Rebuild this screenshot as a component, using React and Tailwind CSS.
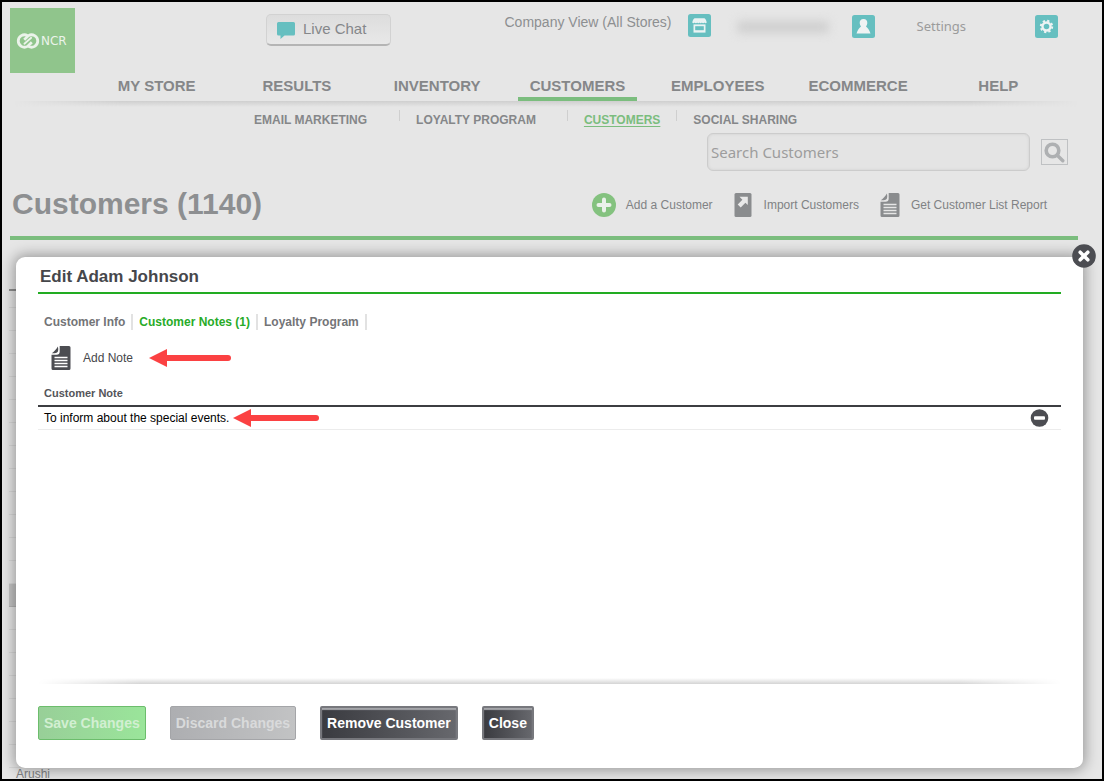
import React from "react";

const NAV = ["MY STORE", "RESULTS", "INVENTORY", "CUSTOMERS", "EMPLOYEES", "ECOMMERCE", "HELP"];

function DocIcon({ className, line }) {
  return (
    <svg className={className} viewBox="0 0 20 24" aria-hidden="true">
      <path
        fill="currentColor"
        d="M8.700 0H18a1.500 1.500 0 0 1 1.500 1.500V22.500A1.500 1.500 0 0 1 18 24H2A1.500 1.500 0 0 1 .5 22.500V8.800H5.500C7.700 8.800 8.700 7.600 8.700 5.500Z"
      />
      <path fill="currentColor" d="M.8 7.200C3 5.900 5.400 3.300 6.900.6 7.500 3 7.300 4.700 6.800 5.700 6 7 3.500 7.300.8 7.200Z" />
      <path stroke={line} strokeWidth="1.600" d="M3.500 11.500h13M3.500 14.500h13M3.500 17.500h13M3.500 20.500h13" />
    </svg>
  );
}

function Arrow({ length }) {
  return (
    <svg width={length} height="18" viewBox={`0 0 ${length} 18`} aria-hidden="true" className="shrink-0">
      <path d={`M16 9H${length - 3}`} stroke="#fb4142" strokeWidth="6" strokeLinecap="round" />
      <path d="M0 9 18 0V18Z" fill="#fb4142" />
    </svg>
  );
}

function Header() {
  return (
    <header>
      <div className="flex h-[70px] items-start pl-2 pr-11 pt-[6px] text-[14px] text-[#8d8f91]">
        <a
          href="#home"
          aria-label="NCR home"
          className="flex size-[65px] shrink-0 items-center bg-[#90c58c] pl-[6px] text-[12px] leading-none text-[#ebf3ea]"
        >
          <svg width="24" height="16" viewBox="0 0 24 16" fill="none" aria-hidden="true">
            <g stroke="#ebf3ea" strokeWidth="2.800">
              <path d="M11.500 2.600A6.200 6.200 0 1 0 11.500 13.400L15.800 9.300" />
              <path d="M12.500 13.400A6.200 6.200 0 1 0 12.500 2.600L8.200 6.700" />
            </g>
            <path d="M8.400 10.700 15.200 4.800" stroke="#ebf3ea" strokeWidth="1.800" strokeLinecap="round" />
          </svg>
          <span className="ml-px font-['DejaVu_Sans',sans-serif]">NCR</span>
        </a>
        <button
          type="button"
          className="ml-[191px] mt-[6px] flex h-8 w-[125px] items-center gap-2 rounded-[5px] border border-[#d2d2d2] border-b-2 border-b-[#b5b5b5] bg-linear-to-b from-[#dddddd] to-[#e8e8e8] pl-[10px] text-[15px] text-[#85878a]"
        >
          <svg width="18" height="17" viewBox="0 0 18 17" aria-hidden="true" className="mt-[2px]">
            <path fill="#66bfc0" d="M1.500 0h15A1.500 1.500 0 0 1 18 1.500V12a1.500 1.500 0 0 1-1.500 1.500H7.500L3.500 17V13.500h-2A1.500 1.500 0 0 1 0 12V1.500A1.500 1.500 0 0 1 1.500 0Z" />
          </svg>
          Live Chat
        </button>
        <div className="ml-auto flex items-start">
          <span className="mt-1 leading-5">Company View (All Stores)</span>
          <button type="button" aria-label="Stores" className="ml-4 mt-[6px]">
            <svg width="23" height="23" viewBox="0 0 23 23" fill="none" aria-hidden="true">
              <rect width="23" height="23" rx="2.500" fill="#66bfc0" />
              <path d="M6.500 4.200h10c1.200 1 2 2.500 2.200 4.300a1.300 1.300 0 0 1-2.400 0 1.300 1.300 0 0 1-2.400 0 1.300 1.300 0 0 1-2.400 0 1.300 1.300 0 0 1-2.400 0 1.300 1.300 0 0 1-2.400 0 1.300 1.300 0 0 1-2.400 0c.2-1.800 1-3.300 2.200-4.300Z" fill="#eaf3f3" />
              <path d="M5.500 10.400h12V18.600h-12Z" fill="#eaf3f3" />
              <rect x="7.200" y="12.200" width="8.600" height="4" fill="#66bfc0" />
            </svg>
          </button>
          <span aria-hidden="true" className="ml-[26px] mt-[13px] h-3 w-[92px] rounded bg-[#cfcfcf] blur-[5px]" />
          <button type="button" aria-label="Account" className="ml-[23px] mt-[7px]">
            <svg width="23" height="23" viewBox="0 0 23 23" aria-hidden="true">
              <rect width="23" height="23" rx="2.500" fill="#66bfc0" />
              <path fill="#eff3f3" d="M11.500 4c2.700 0 4 1.900 3.800 4.300-.1 1.300-.6 2.300-1.300 3.200 1.800 1.500 3.500 3.800 4.500 7h-14c1-3.200 2.700-5.500 4.500-7-.7-.9-1.200-1.900-1.300-3.200C7.500 5.900 8.800 4 11.500 4Z" />
            </svg>
          </button>
          <a href="#settings" className="ml-[42px] mt-2 font-['Noto_Sans',sans-serif] text-[13px] leading-5 text-[#9b9b9b]">
            Settings
          </a>
          <button type="button" aria-label="Preferences" className="ml-[69px] mt-[7px]">
            <svg width="23" height="23" viewBox="0 0 23 23" fill="none" aria-hidden="true">
              <rect width="23" height="23" rx="2.500" fill="#66bfc0" />
              <circle cx="11.500" cy="11.500" r="4" stroke="#eff3f3" strokeWidth="2.400" />
              <circle cx="11.500" cy="11.500" r="5.700" stroke="#eff3f3" strokeWidth="2" strokeDasharray="2.238 2.238" />
            </svg>
          </button>
        </div>
      </div>

      <nav className="ml-[95px] mr-11 grid grid-cols-7 gap-[21px] text-[15px] font-bold leading-5 text-[#858789]">
        {NAV.map((n) => (
          <a
            key={n}
            href="#nav"
            className={
              n === "CUSTOMERS"
                ? "h-[29px] border-b-4 border-[#7bbd7e] pt-1 text-center"
                : "h-[29px] pt-1 text-center"
            }
          >
            {n}
          </a>
        ))}
      </nav>
      <div className="ml-3 mr-6 h-[6px] bg-linear-to-b from-[#cfcfcf] to-[#e6e6e6] mask-x-from-90% mask-x-to-100%" />

      <nav className="flex h-6 items-start pl-[252px] pt-[3px] text-[12px] font-bold leading-5 text-[#858789]">
        <a href="#email">EMAIL MARKETING</a>
        <span className="ml-8 h-[11px] w-px bg-[#cfcfcf]" />
        <a href="#loyalty" className="ml-4">LOYALTY PROGRAM</a>
        <span className="ml-[31px] h-[11px] w-px bg-[#cfcfcf]" />
        <a href="#customers" className="ml-4 text-[#7bbd7e] underline underline-offset-2">CUSTOMERS</a>
        <span className="ml-4 h-[11px] w-px bg-[#cfcfcf]" />
        <a href="#social" className="ml-4">SOCIAL SHARING</a>
      </nav>
    </header>
  );
}

function Toolbar() {
  return (
    <>
      <form className="mr-[34px] mt-[2px] flex items-center justify-end gap-[11px]" onSubmit={(e) => e.preventDefault()}>
        <input
          type="search"
          aria-label="Search Customers"
          placeholder="Search Customers"
          className="h-[38px] w-[323px] rounded-md border border-[#cccccc] bg-[#e4e4e4] px-[3px] font-['Noto_Sans',sans-serif] text-[15px] text-[#777] shadow-[inset_0_0_3px_#cfcfcf] outline-none placeholder:text-[#9d9d9d]"
        />
        <button type="submit" aria-label="Search" className="flex h-[26px] w-[27px] items-center justify-center border border-[#bfc1c3]">
          <svg width="21" height="21" viewBox="0 0 21 21" fill="none" stroke="#aeb0b2" aria-hidden="true">
            <circle cx="8.500" cy="8.500" r="6.300" strokeWidth="3.600" />
            <path d="M13.500 13.500 18.800 18.800" strokeWidth="3.400" strokeLinecap="round" />
          </svg>
        </button>
      </form>
      <div className="ml-2 mr-6 flex h-[69px] items-center justify-between border-b-4 border-[#7bbd7e] pl-[2px] pr-[31px]">
        <h1 className="text-[30px] font-bold leading-9 text-[#8d8f91]">Customers (1140)</h1>
        <div className="mt-[3px] flex items-center text-[12px] text-[#808284]">
          <a href="#add" className="flex items-center gap-[10px]">
            <svg width="24" height="24" viewBox="0 0 24 24" aria-hidden="true">
              <circle cx="12" cy="12" r="12" fill="#84c27f" />
              <path d="M12 6.500v11M6.500 12h11" stroke="#eaf1ea" strokeWidth="4" strokeLinecap="round" />
            </svg>
            Add a Customer
          </a>
          <a href="#import" className="ml-[21px] flex items-center gap-3">
            <svg width="18" height="24" viewBox="0 0 18 24" fill="none" aria-hidden="true">
              <rect x=".5" width="17" height="24" rx="1.500" fill="#8a8c8e" />
              <path d="M5.500 3.800h8.300v8.300l-2.400-2.400-4.700 4.700-3-3 4.700-4.700Z" fill="#e9e9e9" />
            </svg>
            Import Customers
          </a>
          <a href="#report" className="ml-[21px] flex items-center gap-[11px]">
            <DocIcon className="h-6 w-5 text-[#8a8c8e]" line="#e6e6e6" />
            Get Customer List Report
          </a>
        </div>
      </div>
    </>
  );
}

function CustomerList() {
  return (
    <ul className="ml-[7px] mr-6 mt-[49px] border-t-2 border-[#8e8e8e] text-[12px] leading-none text-[#808284]">
      <li className="h-[17px] border-b border-[#d8d8d8]" />
      {Array.from({ length: 20 }, (_, i) => (
        <li
          key={i}
          className={i === 12 ? "h-[23px] border-b border-[#b4b4b4] bg-[#c4c4c4]" : "h-[23px] border-b border-[#d8d8d8]"}
        />
      ))}
      <li className="pl-[7px]">Arushi</li>
    </ul>
  );
}

function Dialog() {
  return (
    <section
      role="dialog"
      aria-labelledby="dialog-title"
      className="absolute bottom-[11px] left-[14px] right-[19px] top-[255px] flex flex-col rounded-[9px] bg-white pl-[22px] pr-[22px] shadow-[0_0_14px_2px_rgba(0,0,0,0.35)]"
    >
      <button type="button" aria-label="Close dialog" className="absolute -right-[13px] -top-[14px]">
        <svg width="24" height="26" viewBox="0 0 24 26" aria-hidden="true">
          <circle cx="12" cy="13" r="11.800" fill="#4c4d52" />
          <path d="m8.200 9.200 7.600 7.600M15.800 9.200l-7.600 7.600" stroke="#fff" strokeWidth="3.600" strokeLinecap="round" />
        </svg>
      </button>
      <h2 id="dialog-title" className="h-[37px] border-b-2 border-[#22ac22] pl-[2px] pt-2 text-[17px] font-bold leading-6 text-[#46474b]">
        Edit Adam Johnson
      </h2>
      <div role="tablist" className="mt-5 flex h-4 items-center pl-[6px] text-[12px] font-bold text-[#737477]">
        <button type="button" role="tab" aria-selected="false" className="h-4 border-r-2 border-[#e2e2e2] pr-[6px] leading-4">
          Customer Info
        </button>
        <button type="button" role="tab" aria-selected="true" className="h-4 border-r-2 border-[#e2e2e2] px-[6px] leading-4 text-[#28ab28]">
          Customer Notes (1)
        </button>
        <button type="button" role="tab" aria-selected="false" className="h-4 border-r-2 border-[#e2e2e2] px-[6px] leading-4">
          Loyalty Program
        </button>
      </div>
      <div className="mt-4 flex items-center gap-4 pl-[13px]">
        <button type="button" className="flex items-center gap-3 text-[12px] text-[#46474b]">
          <DocIcon className="h-6 w-5 text-[#4c4d52]" line="#ffffff" />
          Add Note
        </button>
        <Arrow length={82} />
      </div>
      <table className="mt-3 w-full text-left">
        <thead>
          <tr className="border-b-2 border-[#3c3d41]">
            <th className="h-6 pl-[6px] text-[11px] font-bold text-[#54555a]">Customer Note</th>
            <th aria-label="Actions" />
          </tr>
        </thead>
        <tbody>
          <tr className="border-b border-[#ececec]">
            <td className="h-[23px] pl-[6px]">
              <div className="flex items-center gap-1 text-[12px] leading-4 text-black">
                To inform about the special events.
                <Arrow length={86} />
              </div>
            </td>
            <td className="pr-3">
              <button type="button" aria-label="Delete note" className="ml-auto block">
                <svg width="19" height="18" viewBox="0 0 19 18" aria-hidden="true">
                  <circle cx="9.500" cy="9" r="8.800" fill="#4c4d52" />
                  <rect x="4" y="7.200" width="11" height="3.600" rx="1" fill="#fff" />
                </svg>
              </button>
            </td>
          </tr>
        </tbody>
      </table>
      <div className="mt-auto h-[6px] bg-linear-to-b from-white to-[#d4d4d4] mask-x-from-90% mask-x-to-100%" />
      <div className="mb-7 mt-[22px] flex gap-6 text-[14px] font-bold">
        <button type="button" disabled className="h-[34px] rounded-xs border border-[#6cbd6c] bg-linear-to-r from-[#98cf98] to-[#9ae59a] px-[5px] text-[#d2efd2]">
          Save Changes
        </button>
        <button type="button" disabled className="h-[34px] rounded-xs border border-[#a4a5a8] bg-linear-to-r from-[#adaeb1] to-[#c2c3c4] px-[5px] text-[#d9dadb]">
          Discard Changes
        </button>
        <button type="button" className="h-[34px] rounded-xs border-2 border-[#77787d] bg-linear-to-r from-[#3a3b40] to-[#67686d] px-[5px] text-white shadow-[inset_0_2px_1px_#a5a6aa]">
          Remove Customer
        </button>
        <button type="button" className="h-[34px] rounded-xs border-2 border-[#77787d] bg-linear-to-r from-[#3a3b40] to-[#67686d] px-[5px] text-white shadow-[inset_0_2px_1px_#a5a6aa]">
          Close
        </button>
      </div>
    </section>
  );
}

export default function App() {
  return (
    <div className="relative h-screen overflow-hidden border-2 border-black bg-[#e6e6e6] font-['Liberation_Sans',Arial,sans-serif]">
      <Header />
      <Toolbar />
      <CustomerList />
      <Dialog />
    </div>
  );
}
